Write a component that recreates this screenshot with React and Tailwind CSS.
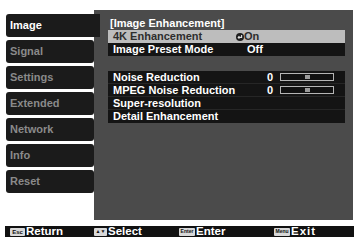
import React from "react";

const tabs = ["Image", "Signal", "Settings", "Extended", "Network", "Info", "Reset"];

function Key({ children, w }) {
  return (
    <span
      className={`flex items-center justify-center h-[8px] rounded-[1px] bg-[#d8d8d8] text-[#111] text-[6px] font-bold leading-none ${w}`}
    >
      {children}
    </span>
  );
}

function Slider() {
  return (
    <div className="ml-[7px] w-[54px] h-[8px] border border-[#b5b5b5] bg-[#111] flex items-center justify-center">
      <div className="w-[5px] h-[4px] bg-[#9a9a9a] ml-[1px]" />
    </div>
  );
}

export default function App() {
  return (
    <div
      className="w-[359px] h-[242px] bg-white flex flex-col overflow-hidden"
      style={{ fontFamily: '"Liberation Sans", Arial, sans-serif' }}
    >
      <div className="flex pt-[10px] pl-[6px] h-[220px]">
        <div className="w-[88px] flex flex-col gap-[3px] pt-[4px]">
          {tabs.map((t, i) => (
            <div
              key={t}
              className={
                i === 0
                  ? "relative z-10 w-[94px] h-[23px] bg-[#1b1b1b] rounded-l-[3px] flex items-center pl-[4px] text-white text-[11px] font-bold"
                  : "w-[88px] h-[23px] bg-[#1b1b1b] rounded-[3px] flex items-center pl-[4px] text-[#8a8a8a] text-[11px] font-bold"
              }
            >
              {t}
            </div>
          ))}
        </div>
        <div className="w-[259px] h-[210px] bg-[#4b4b4b] pl-[14px] pr-[8px] pt-[7px] text-[11px] font-bold leading-none">
          <div className="h-[13px] flex items-center pl-[2px] text-white">[Image Enhancement]</div>
          <div className="h-[13px] flex items-center pl-[5px] bg-[#bdbdbd] text-[#2e2e2e]">
            <span className="w-[123px]">4K Enhancement</span>
            <svg width="8" height="8" viewBox="0 0 8 8" className="mr-[0px]">
              <circle cx="4" cy="4" r="4" fill="#1e1e1e" />
              <path d="M5.6 2 V4.4 H2.6" stroke="#e0e0e0" strokeWidth="1.1" fill="none" />
              <path d="M3.4 3.2 L2.2 4.4 L3.4 5.6" stroke="#e0e0e0" strokeWidth="1.1" fill="none" />
            </svg>
            <span className="ml-[0px]">On</span>
          </div>
          <div className="h-[13px] flex items-center pl-[5px] bg-[#141414] text-white">
            <span className="w-[134px]">Image Preset Mode</span>
            <span>Off</span>
          </div>
          <div className="mt-[15px] bg-[#141414] text-white">
            <div className="h-[13px] flex items-center pl-[5px] border-b border-[#262626]">
              <span className="w-[154px]">Noise Reduction</span>
              <span>0</span>
              <Slider />
            </div>
            <div className="h-[13px] flex items-center pl-[5px] border-b border-[#262626]">
              <span className="w-[154px]">MPEG Noise Reduction</span>
              <span>0</span>
              <Slider />
            </div>
            <div className="h-[13px] flex items-center pl-[5px] border-b border-[#262626]">
              <span>Super-resolution</span>
            </div>
            <div className="h-[13px] flex items-center pl-[5px]">
              <span>Detail Enhancement</span>
            </div>
          </div>
        </div>
      </div>
      <div className="mt-[6px] mx-[5px] h-[11px] bg-[#111] flex items-center text-white text-[11.5px] font-bold leading-none">
        <div className="ml-[5px] w-[84px] flex items-center">
          <Key w="w-[15px]">Esc</Key>
          <span className="ml-[1px]">Return</span>
        </div>
        <div className="w-[85px] flex items-center">
          <Key w="w-[13px]">
            <span className="text-[5px]">▲▼</span>
          </Key>
          <span className="ml-[1px]">Select</span>
        </div>
        <div className="w-[95px] flex items-center">
          <Key w="w-[16px]">
            <span className="text-[5px]">Enter</span>
          </Key>
          <span className="ml-[1px]">Enter</span>
        </div>
        <div className="flex items-center">
          <Key w="w-[16px]">
            <span className="text-[5px]">Menu</span>
          </Key>
          <span className="ml-[1px] tracking-[1px]">Exit</span>
        </div>
      </div>
    </div>
  );
}
